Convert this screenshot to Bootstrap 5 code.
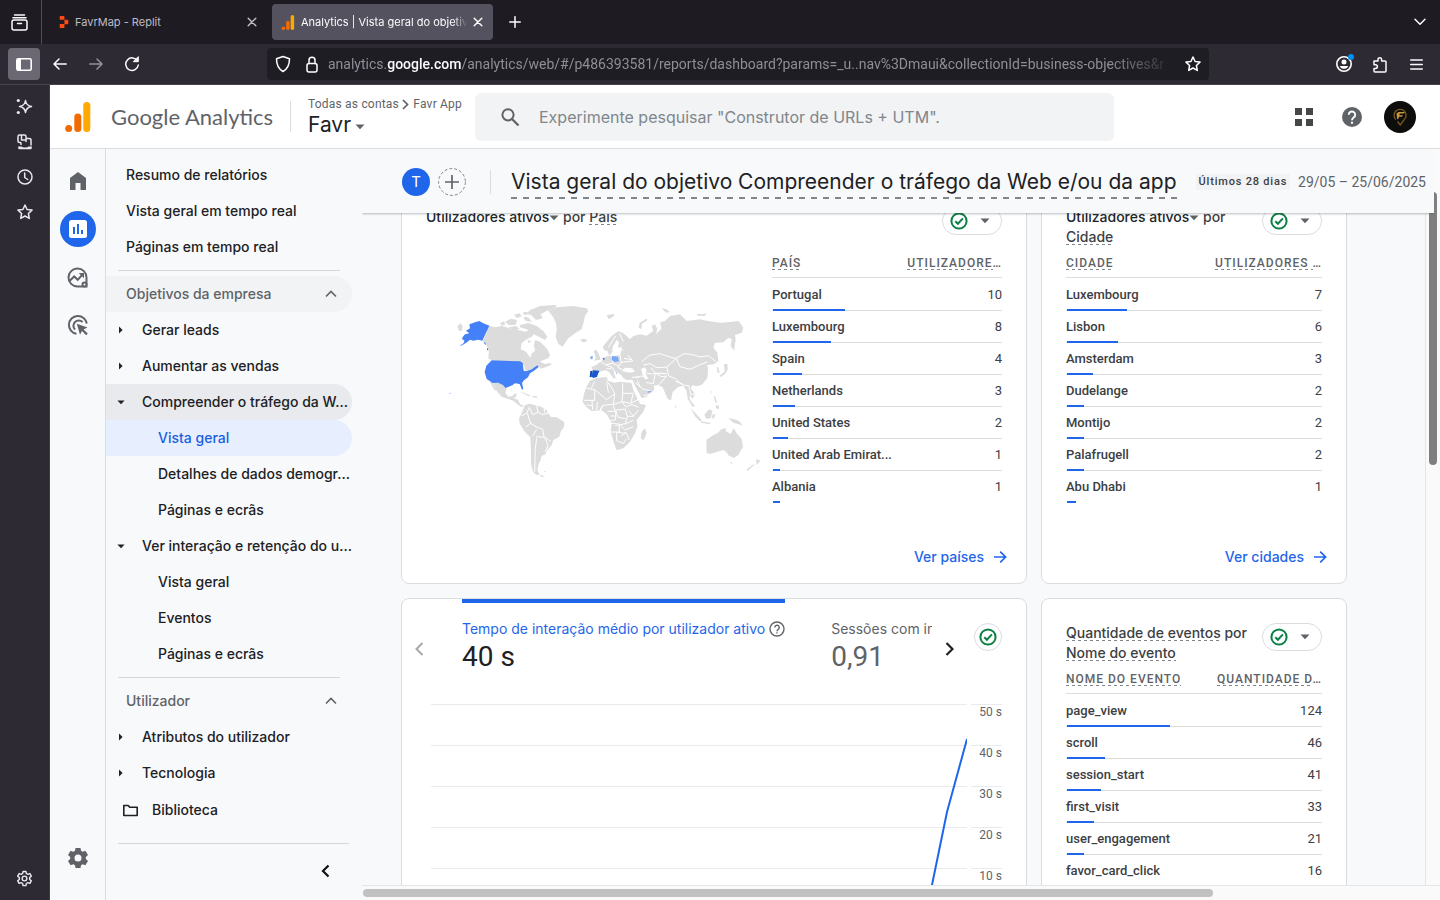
<!DOCTYPE html>
<html lang="pt">
<head>
<meta charset="utf-8">
<meta name="viewport" content="width=device-width, initial-scale=1">
<title>Analytics | Vista geral do objetivo</title>
<link href="https://cdn.jsdelivr.net/npm/bootstrap@5.3.0/dist/css/bootstrap.min.css" rel="stylesheet">
<style>
:root{--blue:#1f66ea;--ink:#202124;--text:#3c4043;--muted:#5f6368;--line:#dadce0;--page:#f8f9fb;--sans:Inter,"Open Sans",sans-serif;--data:Roboto,"Liberation Sans",sans-serif}
body{font-family:var(--sans);font-size:14px;line-height:20px;color:var(--ink);background:var(--page);overflow:hidden}
button{font:inherit;color:inherit;background:none;border:0;padding:0}
a{color:inherit;text-decoration:none}
svg{display:block;flex:none}
.stroke{fill:none;stroke:currentColor;stroke-width:1.5;stroke-linecap:round;stroke-linejoin:round}
.ic{display:flex;align-items:center;justify-content:center;flex:none}
.min-w{min-width:0}
.min-h{min-height:0}
.gray{color:var(--muted)}
/* browser window */
.tabstrip{height:44px;background:#1e1b22;color:#fbfbfe;font-size:11px}
.pinned{width:42px;border-right:1px solid #4f4c57;margin-right:8px;padding-right:2px}
.btab{width:221px;height:36px;border-radius:4px;padding-left:9px;padding-right:10px;gap:6px}
.btab.on{background:#54525e}
.btab.off{width:222px;color:#bfbcc6;padding-right:15px}
.tablist-btn{padding-right:14px}
.fade-end{-webkit-mask-image:linear-gradient(90deg,#000 92%,transparent);mask-image:linear-gradient(90deg,#000 92%,transparent)}
.toolbar{height:41px;background:#2d2a33;color:#fbfbfe;border-bottom:1px solid #45434b}
.tools-start{width:267px;padding-left:8px}
.tools-start .ic{width:32px;height:32px;margin-right:4px;border-radius:4px}
.tools-start .ic.on{background:#6b6873}
.tools-end{width:231px;padding-right:8px}
.tools-end .ic{width:32px;height:32px;margin-left:4px}
.urlbar{height:32px;background:#1f1d24;border-radius:4px;color:#8f8d96;font:14px/20px var(--data);padding:0 8px}
.urlbar b{font-weight:500;color:#fbfbfe}
.lock{margin:0 10px 0 15px}
.sidestrip{width:50px;background:#2d2a33;color:#e9e8ee;padding:4px 0;border-right:1px solid #403d47}
.sidestrip .ic{width:49px;height:35px}
/* header */
.topbar{height:64px;background:#fff;border-bottom:1px solid var(--line);padding-right:24px}
.brand{width:240px;padding-left:15px;gap:20px;font:22px/28px Lato,var(--data);color:var(--muted)}
.account{width:184px;padding-left:17px}
.vline{width:1px;background:var(--line)}
.crumb{font:12px/16px var(--data);color:var(--muted);letter-spacing:.2px}
.prop{font-size:21px;line-height:26px}
.search{max-width:639px;height:48px;background:#f1f3f4;border-radius:6px;padding-left:24px;gap:16px}
.search input{border:0;background:none;outline:0;font-size:16px;color:#80868b}
.search input::placeholder{color:#80868b;opacity:1}
.top-icon{width:32px;height:32px;margin-left:16px;color:var(--muted)}
/* navigation */
.rail{width:56px;border-right:1px solid var(--line);padding:8px 0 18px;color:var(--muted)}
.rail .ic{width:55px;height:48px}
.rail .disc{width:36px;height:36px;border-radius:50%;background:var(--blue)}
.sidenav{width:256px;padding-top:8px;font-weight:500}
.row-link{height:36px;width:246px;padding-left:20px;display:flex;align-items:center;white-space:nowrap;border-radius:0 18px 18px 0}
.row-link.l1{padding-left:11px;gap:17px}
.row-link.l1 svg{width:8px}
.row-link.l2{padding-left:52px}
.row-link.lib{padding-left:16px;gap:13px;height:38px}
.row-link.group{color:var(--muted);padding-right:15px;justify-content:space-between}
.row-link.tint{background:#f1f3f4}
.row-link.open{background:#e8eaed}
.row-link.sel{background:#e7effe;color:#1a5fe0}
.rule{height:1px;width:222px;background:#d3d6da;margin:5px 0 5px 12px}
.rule.wide{width:231px;margin:14px 0 0 12px}
.fold{padding:20px;margin-right:12px}
/* report */
.report-head{height:64px;margin-right:-9px;padding:2px 0 0 40px;background:var(--page);box-shadow:0 1px 2px rgba(60,64,67,.35);clip-path:inset(0 0 -4px 0);position:relative;z-index:2}
.round{width:28px;height:28px;border-radius:50%;background:var(--blue);font-size:15px}
.sep{height:24px;margin:0 20px 0 24px}
.title{font-size:21px;line-height:30px;font-weight:400}
.dash{background:repeating-linear-gradient(90deg,#80868b 0 3px,transparent 3px 6px) left bottom/100% 1px no-repeat}
.dash-lg{background:repeating-linear-gradient(90deg,#80868b 0 6px,transparent 6px 12px) left bottom/100% 2px no-repeat;padding:2px 0}
.chip{font:500 11px/16px var(--data);letter-spacing:.8px;color:var(--text);background:#f1f3f4;padding:0 3px}
.range{font:14px/20px var(--data);color:var(--muted)}
.vscroll{width:15px;border-left:1px solid #e6e6e6;background:#fafafa}
.vscroll div{width:8px;height:273px;margin:43px 0 0 3px;border-radius:4px;background:#7f7f7f}
.hscroll{height:15px;border-top:1px solid #e6e6e6;background:#fafafa;padding:3px 1px}
.hscroll div{height:8px;width:79%;border-radius:4px;background:#c1c1c1}
.board{margin-top:-31px;padding:0 78px 0 39px;display:grid;grid-template-columns:626fr 306fr;grid-template-rows:402px 420px;gap:14px}
.tile{background:#fff;border:1px solid var(--line);border-radius:8px;padding:24px;min-width:0;display:flex;flex-direction:column}
.tile-title{height:40px;color:var(--text);display:flex;justify-content:space-between;align-items:flex-start;font-weight:500}
.tile-title div>svg{display:inline-block}
.pill{height:28px;width:60px;border:1px solid var(--line);border-radius:14px;display:flex;align-items:center;justify-content:space-between;padding:0 11px 0 7px;background:#fff;flex:none}
.pill.single{width:28px;padding:0;justify-content:center}
.map{margin:43px 0 0 14px}
.side-col{width:230px}
.data{width:100%;table-layout:fixed;font:500 13px/20px var(--data);color:var(--text)}
.data th,.data td{padding:0}
.data thead th{font-size:12px;line-height:18px;font-weight:500;letter-spacing:1px;color:var(--muted);height:31px;white-space:nowrap;background:linear-gradient(var(--line),var(--line)) 0 100%/100% 1px no-repeat}
.data thead .num{width:100px}
.data.side thead .num{width:108px}
.data tbody th{font-weight:500;height:32px;white-space:nowrap}
.data tbody tr:first-child th{height:33px}
.data tbody tr{background:linear-gradient(var(--blue),var(--blue)) 1px 100%/var(--w) 2px no-repeat,linear-gradient(var(--line),var(--line)) 0 100%/100% 1px no-repeat}
.data tbody tr.end{background:linear-gradient(var(--blue),var(--blue)) 1px 100%/var(--w) 2px no-repeat}
.num{text-align:right}
.data tbody .num{font-weight:400}
.more{color:var(--blue);font-weight:500;margin:auto -6px -8px auto;display:flex;align-items:center;gap:8px}
.metrics{margin:-24px 0 0 -24px}
.metric-list{margin-left:26px;gap:46px}
.metric{border-top:4px solid transparent;padding-top:16px;flex:none;color:var(--muted);text-align:left}
.metric.on{border-color:var(--blue)}
.metric.on .name{color:var(--blue)}
.metric .val{font-size:28px;line-height:36px;font-family:var(--data);display:block}
.metric.on .val{color:var(--ink)}
.step{width:34px;height:32px;margin-top:34px}
.plot{position:relative;margin:29px 0 0 5px}
.tick{height:41px;gap:4px;font:12px/15px var(--data);color:var(--muted)}
.tick>*{border-top:1px solid #e8eaed}
.tick span{width:31px;text-align:right}
.trend{position:absolute;right:35px;top:0}
</style>
</head>
<body class="vh-100 d-flex flex-column">
<svg class="d-none">
<symbol id="ok" viewBox="0 0 18 18"><g fill="none" stroke="#0b8043" stroke-width="2"><circle cx="9" cy="9" r="7.6"/><path d="M5.3 9.2l2.6 2.6 5-5.4"/></g></symbol>
<symbol id="caret" viewBox="0 0 10 6"><path d="M.5.5h9L5 5.3z" fill="currentColor"/></symbol>
<symbol id="right" viewBox="0 0 6 10"><path d="M.5.5v9L5 5z" fill="currentColor"/></symbol>
<symbol id="arrow" viewBox="0 0 16 16"><path d="M2 8h11.5M8.2 2.6L13.6 8l-5.4 5.4" fill="none" stroke="currentColor" stroke-width="1.7"/></symbol>
<symbol id="ga" viewBox="0 0 26 30"><rect x="18.3" width="7" height="30" rx="3.5" fill="#ffa800"/><rect x="9.3" y="11.5" width="7" height="18.5" rx="3.5" fill="#f26b00"/><circle cx="3.7" cy="26.4" r="3.5" fill="#f26b00"/></symbol>
<symbol id="star" viewBox="0 0 16 16"><path d="M8 1l2.1 4.5 4.9.6-3.6 3.4.9 4.9L8 12l-4.3 2.4.9-4.9L1 6.1l4.9-.6z"/></symbol>
<symbol id="x" viewBox="0 0 10 10"><path d="M1.200 1.200l7.600 7.600M8.800 1.200L1.200 8.800"/></symbol>
</svg>

<header class="flex-shrink-0">
  <div class="tabstrip d-flex align-items-center">
    <button class="pinned ic h-100" aria-label="Lista de separadores"><svg class="stroke" width="17" height="17" viewBox="0 0 17 17"><path d="M3.500 1h10M2 3.700h13"/><rect x="1" y="6" width="15" height="10" rx="2"/><path d="M6.500 9.500h4"/></svg></button>
    <div class="btab off d-flex align-items-center">
      <svg width="10" height="12" viewBox="0 0 10 14"><path d="M0 1q0-1 1-1h3.500q1 0 1 1v3.500H0zM5.500 4.500H9q1 0 1 1v3q0 1-1 1H5.500zM0 9.300h5.500V13q0 1-1 1H1q-1 0-1-1z" fill="#ff4a13"/></svg>
      <span class="flex-grow-1">FavrMap - Replit</span>
      <button aria-label="Fechar"><svg class="stroke" width="10" height="10"><use href="#x"/></svg></button>
    </div>
    <div class="btab on d-flex align-items-center">
      <svg width="14" height="15"><use href="#ga"/></svg>
      <span class="flex-grow-1 overflow-hidden text-nowrap fade-end">Analytics | Vista geral do objetivo</span>
      <button aria-label="Fechar"><svg class="stroke" width="10" height="10"><use href="#x"/></svg></button>
    </div>
    <button class="ic px-3" aria-label="Novo separador"><svg class="stroke" width="12" height="12" viewBox="0 0 12 12"><path d="M6 .7v10.600M.7 6h10.600"/></svg></button>
    <button class="ic ms-auto tablist-btn" aria-label="Listar separadores"><svg class="stroke" width="12" height="8" viewBox="0 0 12 8"><path d="M1 1.300l5 5 5-5"/></svg></button>
  </div>
  <div class="toolbar d-flex align-items-center">
    <div class="tools-start d-flex flex-shrink-0">
      <button class="ic on" aria-label="Barra lateral"><svg width="16" height="13" viewBox="0 0 16 13"><rect x=".8" y=".8" width="14.400" height="11.400" rx="1.500" fill="none" stroke="#fff" stroke-width="1.600"/><path d="M1 1h4v11H1z" fill="#fff"/></svg></button>
      <button class="ic" aria-label="Retroceder"><svg class="stroke" width="14" height="12" viewBox="0 0 14 12"><path d="M13.300 6H1M6 1L1 6l5 5"/></svg></button>
      <button class="ic opacity-50" aria-label="Avançar"><svg class="stroke" width="14" height="12" viewBox="0 0 14 12"><path d="M.7 6H13M8 1l5 5-5 5"/></svg></button>
      <button class="ic" aria-label="Recarregar"><svg class="stroke" width="16" height="16" viewBox="0 0 16 16"><path d="M13.500 5A6.300 6.300 0 1 0 14.300 9"/><path d="M14.300 1v4.700H9.600z" fill="currentColor" stroke-width="1"/></svg></button>
    </div>
    <div class="urlbar d-flex align-items-center flex-grow-1 overflow-hidden">
      <svg class="stroke text-white" width="16" height="18" viewBox="0 0 16 18"><path d="M8 1.500l6.500 2.300c0 6-1.500 10-6.500 12.700C3 13.800 1.500 9.800 1.500 3.800z"/></svg>
      <svg class="stroke text-white lock" width="12" height="17" viewBox="0 0 12 17"><rect x="1" y="7.500" width="10" height="8.500" rx="2"/><path d="M3 7.500V4.300a3 3 0 0 1 6 0v3.200"/></svg>
      <span class="flex-grow-1 overflow-hidden text-nowrap fade-end">analytics.<b>google.com</b>/analytics/web/#/p486393581/reports/dashboard?params=_u..nav%3Dmaui&amp;collectionId=business-objectives&amp;r</span>
      <button class="text-white ms-2" aria-label="Adicionar marcador"><svg class="stroke" width="16" height="16"><use href="#star"/></svg></button>
    </div>
    <div class="tools-end d-flex justify-content-end flex-shrink-0">
      <button class="ic" aria-label="Conta"><svg width="20" height="22" viewBox="-1 1 20 22"><circle cx="9" cy="12" r="7.200" fill="none" stroke="#fff" stroke-width="1.600"/><circle cx="9" cy="10" r="2.500" fill="#fff"/><path d="M4.700 14h8.600c-.8 2-2.500 2.800-4.300 2.800S5.500 16 4.700 14z" fill="#fff"/><circle cx="16" cy="5" r="3" fill="#0090ed"/></svg></button>
      <button class="ic" aria-label="Extensões"><svg class="stroke" width="16" height="17" viewBox="0 0 16 17"><path d="M2 5h4V3.500a1.800 1.800 0 0 1 3.600 0V5H13q1 0 1 1v9q0 1-1 1H3q-1 0-1-1v-2.500h1.500a1.900 1.900 0 0 0 0-3.800H2z"/></svg></button>
      <button class="ic" aria-label="Menu"><svg class="stroke" width="13" height="11" viewBox="0 0 13 11"><path d="M.7 1h11.600M.7 5.500h11.600M.7 10h11.600"/></svg></button>
    </div>
  </div>
</header>

<div class="d-flex flex-grow-1 min-h">
  <aside class="sidestrip d-flex flex-column flex-shrink-0">
    <button class="ic" aria-label="Assistente"><svg width="17" height="17" viewBox="0 0 17 17"><path d="M9.500 2.500q.8 5.200 6 6-5.200.8-6 6-.8-5.200-6-6 5.200-.8 6-6z" class="stroke"/><circle cx="2.300" cy="2.500" r="1.600" fill="currentColor"/><circle cx="2.300" cy="14.500" r="1.600" fill="currentColor"/></svg></button>
    <button class="ic" aria-label="Separadores sincronizados"><svg width="16" height="16" viewBox="0 0 16 16"><path d="M3.500 8.500h-1q-1.500 0-1.500-1.500V2.500Q1 1 2.500 1h5Q9 1 9 2.500v5M4.500 1v5M4.500 6H9M9 4.500h3q2 0 2 1.500v5M4 9v1.500" class="stroke"/><path d="M1 12.500h3.500q.5 1 3.500 1t3.500-1H15q0 2.700-1.500 2.700h-11Q1 15.200 1 12.500z" fill="currentColor"/></svg></button>
    <button class="ic" aria-label="Histórico"><svg class="stroke" width="16" height="16" viewBox="0 0 16 16"><circle cx="8" cy="8" r="7"/><path d="M7.700 4v4.500l3 2"/></svg></button>
    <button class="ic" aria-label="Marcadores"><svg class="stroke" width="16" height="16"><use href="#star"/></svg></button>
    <button class="ic mt-auto" aria-label="Personalizar"><svg class="stroke" width="17" height="17" viewBox="0 0 18 18"><path d="M7.500 1.500h3l.5 2.200 1.500.9 2.200-.8 1.500 2.700L14.500 8v2l1.700 1.500-1.500 2.700-2.200-.8-1.500.9-.5 2.200h-3L7 14.300l-1.500-.9-2.200.8-1.500-2.700L3.500 10V8L1.800 6.500l1.500-2.700 2.200.8L7 3.700z"/><circle cx="9" cy="9" r="2.500"/></svg></button>
  </aside>

  <div class="d-flex flex-column flex-grow-1 min-w">
    <div class="topbar d-flex align-items-center flex-shrink-0">
      <div class="brand d-flex align-items-center flex-shrink-0"><svg width="26" height="30"><use href="#ga"/></svg><span class="text-nowrap">Google Analytics</span></div>
      <div class="vline h-50"></div>
      <div class="account flex-shrink-0 text-nowrap">
        <div class="crumb">Todas as contas <svg class="d-inline-block align-middle" width="8" height="11" viewBox="0 0 8 11"><path d="M1 1l4.500 4.500L1 10" fill="none" stroke="currentColor" stroke-width="1.700"/></svg> Favr App</div>
        <button class="prop d-flex align-items-center">Favr <svg class="ms-1 mt-1 gray" width="10" height="6"><use href="#caret"/></svg></button>
      </div>
      <label class="search d-flex align-items-center flex-grow-1">
        <svg width="22" height="22" viewBox="0 0 22 22"><circle cx="9" cy="8.800" r="5.600" fill="none" stroke="#5f6368" stroke-width="2"/><path d="M13 13l6.500 6.500" stroke="#5f6368" stroke-width="2.300"/></svg>
        <input class="flex-grow-1" type="search" aria-label="Pesquisar" placeholder="Experimente pesquisar &quot;Construtor de URLs + UTM&quot;.">
      </label>
      <button class="top-icon ic ms-auto" aria-label="Aplicações"><svg width="18" height="18" viewBox="0 0 18 18"><path d="M0 0h7v7H0zM11 0h7v7h-7zM0 11h7v7H0zM11 11h7v7h-7z" fill="#444746"/></svg></button>
      <button class="top-icon ic" aria-label="Ajuda"><svg width="20" height="20" viewBox="0 0 20 20"><circle cx="10" cy="10" r="10" fill="currentColor"/><path d="M6.800 7.700a3.200 3.200 0 1 1 5 2.600c-1 .8-1.800 1.300-1.800 2.900" fill="none" stroke="#fff" stroke-width="1.900"/><path d="M9 14.800h2v2H9z" fill="#fff"/></svg></button>
      <button class="top-icon ic" aria-label="Perfil"><svg width="32" height="32" viewBox="0 0 32 32"><circle cx="16" cy="16" r="16" fill="#0d0d0c"/><path d="M11.800 18.500a6 6 0 1 1 9.200-.8L16.300 24l-2.800-3.500" fill="none" stroke="#7d5a22" stroke-width="1.300"/><path d="M12.500 12.500l2-1.500H21l-1.300 1.500h-4l-.3 1.700h3.700l-1.200 1.500h-2.800L14 18.500l-1-1z" fill="#c8963c"/></svg></button>
    </div>

    <div class="d-flex flex-grow-1 min-h">
      <nav class="rail d-flex flex-column flex-shrink-0">
        <a href="#" class="ic" aria-label="Página inicial"><svg width="16" height="18" viewBox="0 0 16 18"><path d="M0 6l8-6 8 6v12h-5.500v-7h-5v7H0z" fill="currentColor"/></svg></a>
        <a href="#" class="ic" aria-label="Relatórios"><span class="disc ic"><svg width="18" height="18" viewBox="0 0 18 18"><rect width="18" height="18" rx="2.500" fill="#fff"/><path d="M4 7h2v7H4zM8 4h2v10H8zM12 10h2v4h-2z" fill="#1f66ea"/></svg></span></a>
        <a href="#" class="ic" aria-label="Explorar"><svg width="21" height="21" viewBox="0 0 21 21"><path d="M10.500 1.500a9 9 0 1 0 0 18h9v-9a9 9 0 0 0-9-9z" fill="none" stroke="currentColor" stroke-width="2"/><path d="M2.500 14l4.700-4.500 3.500 3.300 4.800-5.300" fill="none" stroke="currentColor" stroke-width="2"/><path d="M11.700 6H17v5.300z" fill="currentColor"/><circle cx="17.500" cy="17.500" r="3" fill="currentColor"/><circle cx="17.500" cy="17.500" r="1" fill="#f8f9fb"/></svg></a>
        <a href="#" class="ic" aria-label="Publicidade"><svg width="22" height="22" viewBox="0 0 22 22"><g fill="none" stroke="currentColor" stroke-width="2"><path d="M9.500 19.800A9 9 0 1 1 19.800 9.500"/><path d="M8 15.600A5.300 5.300 0 1 1 15.600 8"/></g><path d="M9.800 9.800l10.700 3.600-3.900 2 4.200 4.200-1.600 1.600-4.200-4.200-2 3.700z" fill="currentColor"/></svg></a>
        <a href="#" class="ic mt-auto" aria-label="Administração"><svg width="20" height="20" viewBox="0 0 20 20"><path fill-rule="evenodd" d="M7.500 0h5l.5 2.800 1.700 1 2.700-1L20 7l-2.200 1.900v2.200L20 13l-2.600 4.200-2.700-1-1.700 1-.5 2.800h-5L7 17.200l-1.700-1-2.700 1L0 13l2.200-1.900V8.900L0 7l2.600-4.200 2.700 1L7 2.800zM10 6.500a3.500 3.500 0 1 0 0 7 3.500 3.500 0 0 0 0-7z" fill="currentColor"/></svg></a>
      </nav>

      <nav class="sidenav flex-shrink-0">
        <a href="#" class="row-link">Resumo de relatórios</a>
        <a href="#" class="row-link">Vista geral em tempo real</a>
        <a href="#" class="row-link">Páginas em tempo real</a>
        <div class="rule"></div>
        <button class="row-link group tint">Objetivos da empresa <svg width="12" height="8" viewBox="0 0 12 8"><path d="M1 6.500l5-5 5 5" fill="none" stroke="currentColor" stroke-width="1.600"/></svg></button>
        <a href="#" class="row-link l1"><svg height="8"><use href="#right"/></svg>Gerar leads</a>
        <a href="#" class="row-link l1"><svg height="8"><use href="#right"/></svg>Aumentar as vendas</a>
        <a href="#" class="row-link l1 open"><svg height="5"><use href="#caret"/></svg>Compreender o tráfego da W...</a>
        <a href="#" class="row-link l2 sel">Vista geral</a>
        <a href="#" class="row-link l2">Detalhes de dados demogr...</a>
        <a href="#" class="row-link l2">Páginas e ecrãs</a>
        <a href="#" class="row-link l1"><svg height="5"><use href="#caret"/></svg>Ver interação e retenção do u...</a>
        <a href="#" class="row-link l2">Vista geral</a>
        <a href="#" class="row-link l2">Eventos</a>
        <a href="#" class="row-link l2">Páginas e ecrãs</a>
        <div class="rule"></div>
        <button class="row-link group">Utilizador <svg width="12" height="8" viewBox="0 0 12 8"><path d="M1 6.500l5-5 5 5" fill="none" stroke="currentColor" stroke-width="1.600"/></svg></button>
        <a href="#" class="row-link l1"><svg height="8"><use href="#right"/></svg>Atributos do utilizador</a>
        <a href="#" class="row-link l1"><svg height="8"><use href="#right"/></svg>Tecnologia</a>
        <a href="#" class="row-link lib"><svg width="17" height="13" viewBox="0 0 17 13"><path d="M1.800 11.500V1.500h4.400l1.500 1.700h7.500v8.300z" fill="none" stroke="currentColor" stroke-width="1.600" stroke-linejoin="round"/></svg>Biblioteca</a>
        <div class="rule wide"></div>
        <button class="d-block ms-auto fold" aria-label="Recolher"><svg width="9" height="14" viewBox="0 0 9 14"><path d="M7.500 1.500L2 7l5.500 5.500" fill="none" stroke="#111" stroke-width="2.200"/></svg></button>
      </nav>

      <main class="d-flex flex-column flex-grow-1 min-w">
        <div class="d-flex flex-grow-1 min-h">
          <div class="d-flex flex-column flex-grow-1 min-w">
            <div class="report-head d-flex align-items-center flex-shrink-0 text-nowrap">
              <span class="round ic text-white me-2">T</span>
              <button aria-label="Adicionar comparação"><svg width="28" height="28" viewBox="0 0 28 28"><circle cx="14" cy="14" r="13.400" fill="none" stroke="#80868b" stroke-dasharray="3 2"/><path d="M14 7v14M7 14h14" stroke="#5f6368" stroke-width="1.700"/></svg></button>
              <div class="vline sep"></div>
              <h1 class="title dash-lg mb-0">Vista geral do objetivo Compreender o tráfego da Web e/ou da app</h1>
              <span class="chip ms-auto me-2">Últimos 28 dias</span>
              <span class="range me-2">29/05 – 25/06/2025</span>
            </div>
            <div class="flex-grow-1 overflow-hidden">
              <div class="board">
                <section class="tile">
                  <div class="tile-title"><div><span class="text-dark">Utilizadores ativos</span><svg class="gray" width="10" height="7" viewBox="0 0 10 7"><use href="#caret" width="10" height="6"/></svg> por <span class="dash">País</span></div>
                    <button class="pill" aria-label="Qualidade dos dados"><svg width="18" height="18"><use href="#ok"/></svg><svg class="gray" width="10" height="6"><use href="#caret"/></svg></button></div>
                  <div class="d-flex justify-content-between">
                    <svg class="map" width="330" height="200" viewBox="0 0 990 600" role="img" aria-label="Mapa mundial">
                      <g fill="#dcdcdc">
                        <path d="M52 108l10-8 6 8-2 14-9 1zM148 107l17 5 20-4 15 4 15 6 20 2 20 5 10-3 5-12 8 8 7 10-10 12-15 8-15 12-3 18 16 7 7 10 7 8 3-13 10-7-3-18 3-15 15 5 10 10 12 13 8 17-5 10-15 5-10 5 15 7 16-3 4 5-17 7-14 5-10-7-17 7-20 7-5-17-15-9-80-6-12-5 2-25-10-20-8-8z"/>
                        <path d="M240 105l25-6 25 9 20 15 12 17-7 10-15-8-16-8-14-10-14-8-16-4zM270 60l30-12 50-3-5 9-25 9-18 10 6 12-20 5-14-14-14-5zM195 95l18-9 18 4-4 14-20 2zM222 74l16-4 8 9-16 5zM250 80l14 2 12 14-20-4zM205 112l22-4 12 8-18 6zM180 100l12-6 4 9-10 4zM252 65l12 2-4 9-12-4zM262 150l12 4-8 6z"/>
                        <path d="M325 62l25-10 50-4 40 7 5 8-10 15-5 22-5 18-20 12-20 15-10 15-7 10-13-8-8-22 3-20-2-20-8-18zM420 149l10-3 11 3-2 6-10 2z"/>
                        <path d="M158 275l32 8 10 12-4 14 9 11 13-2 6-8 6 2-3 10-7 3 14 4 6 14 12 4-8 4-14-10-10-9-15-5-20-7-15-18zM149 275h7l13 25-5 1zM238 307l15 1 20 10-7 1-14-8zM278 318l12 1 2 4-14-1z"/>
                        <path d="M255 345l15-4 20 6 15 4 15 10 12 20 18 1 23 14-1 14-10 15-4 15-18 10-5 15-13 15-5 12-12 6-4 14-6 13-3 15 7 15-10-1-10-8-6-25v-42l-2-38-16-15-16-25-2-15 7-15zM302 554l12 5-12 3zM312 543l8 3-8 1z"/>
                        <path d="M450 272l20-8 30-3 4 11 20 6 15-3 35 4 6 21 14 30 6 12 18 3-8 20-20 25 2 20-7 20-15 25-20 20-20 6-8-21-10-35 3-25-15-28-15-11-30 2-15-11-12-16 4-25 8-22zM605 425l10-10 5 14-9 22-9-6z"/>
                        <path d="M461 182l9-2 8 16 4 13-20 3 5-9zM488 172l12-17 15-17 20-15 14 6 3 25-8 17-10 2 3-17-7-6-12 20-1 16-9 12-7-18-5 4zM468 225l18-13 6-10 12-4 12 1 25-4 3-20 8-25-4-22 12 10 10 10 10-10 20-5 20 4 20-15-5-14 10-5 7 14-4 15 16-15-3-20 14-4 15-15 30-5 20 20 40-5 20 4 40 6 30-2 26-3 14 20-5 15-20 7 2 14-5 33-10-14 3-20-10-5-15 14-25 1-5 15 12 15 3 25-13 10-20 2 2 14-2 25-16 20-14 5-15-3-5 8 14 20-8 12-10-12 2 15 15 20-7 2-15-25-4-25-10-14-15 4-16 15-5 25-10-4-15-35-15-7-12 2 2 12-24 22-16 4-16-32-10-24-17 1-10-5-6-10-15-10-8 2 6 17-6 2-12-18-10-7-15 2-14 8-10-7-6-13z"/>
                        <path d="M500 76l24-5-4 9-14 8zM596 112l3-14 20-12 4 4-17 11-2 17zM664 54l15 4 11 9-11 1zM770 73l30-2-5 6h-22zM830 230l5 2 4 18-6-2zM852 223l10-2 1 17-7 13-14 10-3-4 15-12zM752 355l14 14 20 22-6 3-14-14zM793 374l14-16 10 4-4 22-14 3zM783 394l28 5-1 4-27-5zM818 372l8 2-5 12-5-2zM820 318l6 2 6 20-6-4zM828 345l10 3-2 10-8-3zM866 384l16 4 14 4 13 15-14-5-12-2-10-8zM704 345l6 6-3 5zM812 303l3 1-2 10z"/>
                        <path d="M799 450l20-14 15-8 10-10 14-4-1 9 15 9 9-18 8 15 16 18 4 23-14 25-14 9-16-8-5-9-10-7-20 6-20 6-10-3zM870 517l7-1-3 7zM948 508l14 4-12 12zM946 522l-23 20-4-3 18-14z"/>
                      </g>
                      <g fill="#fff"><path d="M545 243l10-10 22 2 8 10-16 3zM603 236l12-4 5 10-3 10 8 14-10 2-8-16z"/><path d="M577 282l7 4 22 40-5 2z"/></g>
                      <g fill="none" stroke="#fff" stroke-width="3">
                        <path d="M440 295l24 4v32h-32M464 299l36 30 24-18-8-16-16-23M464 275l-10 20M524 311l-4 32-32 3-6 16M500 278l5 30M548 280v30h32M548 310l-2 25-24 8M580 310l-8 30-26-5M546 335l10 15 20-6 20 8M572 340l24-12M520 343l4 18 32-4M488 346l-8 14M456 330l2 30M440 345l16 2M472 335l-2 25M502 364h26l6 18 22 4M528 364l-2 26-22 2M556 357l6 22-6 22-30 6M562 379h20M512 400l26 2v24h-26M538 402l18 18 24-10M530 452v-25l30 3 8 20M544 438l14-12M566 362l14 16 16-18M512 378h12M530 452l20 8 10-14M580 390l-24 12"/>
                        <path d="M244 378l16-8 8-18M268 352l10 22 18-8 10 8 24-6M290 347l4 20M262 370l10 30-14 10M272 400l16 10 20 8 4 22 20 14M278 438l12-20M288 440l26 2 10 24-8 20M290 445l-4 30-2 70M312 352l2 16M324 360v12"/>
                        <path d="M605 215l25-20 30-4 30 10 18 4-14 14-14 12-30 2-20-12-20 4M708 205l24-14 20 2 30 8 24-4 22 18M708 205l12 25 30 8 30-14 22-8M680 230l6 28 20 8 20 18 20 4M632 233l14 16 34 2M620 250l20 2 26-2M646 249l-6 32M680 258l-30 34M640 281l-22-4M588 264l16-6 14 4M600 290l-8-18M586 278l24 20 22 4M612 318l24-8M706 274l22 8M746 285l6 28 14 2M766 300l-4 12M650 252l14 8 16-2M540 195l4 22 34-4M544 217l-10 16M578 213l-14-18M516 198l2 22 18 8M516 220l-20 4M496 224l20 8 10 16M500 235l14 2M550 180h-12M505 172l22-34M538 130l12 24M534 233l14 6M552 205l24 4M480 213l14 10M575 262l26-2"/>
                      </g>
                      <path d="M68 141l7-8 13-3-10-8 12-7-2-12 17-6 13-4 12 7 18 7-21 45-13-3-14 3-10-3-9 8-15 9-8 3 14-11 1-7-7-3zM132 155l6 7-1 3-6-7zM141 174l3 1 1 7-4-2zM155 211l85 3 8 4 3 24 7 2 17-6 17-12 4 5-14 11-12 8-6 12-12 9-6 8 4 18-4 2-7-17-14-2-8 6-20 8-8-9-15-7-16 1-18-12-6-20 5-20z" fill="#4480f8"/>
                      <path d="M516 198l18 2 3 14-13 2-9-6zM452 199h7l-2 9-6-1zM622 305l10-3 1 4-9 2zM28 308l5 2-3 3zM528 246l4 4-3 3z" fill="#7ba7fa"/>
                      <path d="M458 241l20 1-4 10-3 9-12 3-4-5zM487 206l6-3v7z" fill="#1b57cf"/><path d="M451 243l6-1-2 20-6-1z" fill="#1547b0"/>
                    </svg>
                    <div class="side-col">
                      <table class="data">
                        <thead><tr><th scope="col"><span class="dash">PAÍS</span></th><th scope="col" class="num"><span class="dash">UTILIZADORE</span>…</th></tr></thead>
                        <tbody>
                          <tr style="--w:72px"><th scope="row">Portugal</th><td class="num">10</td></tr>
                          <tr style="--w:58px"><th scope="row">Luxembourg</th><td class="num">8</td></tr>
                          <tr style="--w:29px"><th scope="row">Spain</th><td class="num">4</td></tr>
                          <tr style="--w:22px"><th scope="row">Netherlands</th><td class="num">3</td></tr>
                          <tr style="--w:15px"><th scope="row">United States</th><td class="num">2</td></tr>
                          <tr style="--w:7px"><th scope="row">United Arab Emirat...</th><td class="num">1</td></tr>
                          <tr class="end" style="--w:7px"><th scope="row">Albania</th><td class="num">1</td></tr>
                        </tbody>
                      </table>
                    </div>
                  </div>
                  <a href="#" class="more">Ver países <svg width="16" height="16"><use href="#arrow"/></svg></a>
                </section>

                <section class="tile">
                  <div class="tile-title"><div><span class="text-dark">Utilizadores ativos</span><svg class="gray" width="10" height="7" viewBox="0 0 10 7"><use href="#caret" width="10" height="6"/></svg> por<br><span class="dash">Cidade</span></div>
                    <button class="pill" aria-label="Qualidade dos dados"><svg width="18" height="18"><use href="#ok"/></svg><svg class="gray" width="10" height="6"><use href="#caret"/></svg></button></div>
                  <table class="data side">
                    <thead><tr><th scope="col"><span class="dash">CIDADE</span></th><th scope="col" class="num"><span class="dash">UTILIZADORES </span>…</th></tr></thead>
                    <tbody>
                      <tr style="--w:60px"><th scope="row">Luxembourg</th><td class="num">7</td></tr>
                      <tr style="--w:51px"><th scope="row">Lisbon</th><td class="num">6</td></tr>
                      <tr style="--w:26px"><th scope="row">Amsterdam</th><td class="num">3</td></tr>
                      <tr style="--w:17px"><th scope="row">Dudelange</th><td class="num">2</td></tr>
                      <tr style="--w:17px"><th scope="row">Montijo</th><td class="num">2</td></tr>
                      <tr style="--w:17px"><th scope="row">Palafrugell</th><td class="num">2</td></tr>
                      <tr class="end" style="--w:9px"><th scope="row">Abu Dhabi</th><td class="num">1</td></tr>
                    </tbody>
                  </table>
                  <a href="#" class="more">Ver cidades <svg width="16" height="16"><use href="#arrow"/></svg></a>
                </section>

                <section class="tile">
                  <div class="d-flex">
                    <div class="metrics d-flex flex-grow-1 overflow-hidden">
                      <button class="step ic" aria-label="Anterior"><svg width="9" height="14" viewBox="0 0 9 14"><path d="M7.500 1L1.500 7l6 6" fill="none" stroke="#a5a8ac" stroke-width="2"/></svg></button>
                      <div class="metric-list d-flex flex-grow-1 overflow-hidden text-nowrap">
                        <button class="metric on"><span class="name d-flex align-items-center">Tempo de interação médio por utilizador ativo <svg class="ms-1 gray" width="16" height="16" viewBox="0 0 16 16"><circle cx="8" cy="8" r="7" fill="none" stroke="currentColor" stroke-width="1.400"/><path d="M5.800 6.400a2.200 2.200 0 1 1 3.500 1.800C8.500 8.800 8 9.200 8 10.200" fill="none" stroke="currentColor" stroke-width="1.400"/><path d="M7.300 11.200h1.400v1.400H7.300z" fill="currentColor"/></svg></span><span class="val">40 s</span></button>
                        <button class="metric"><span class="name">Sessões com interação</span><span class="val">0,91</span></button>
                      </div>
                      <button class="step ic" aria-label="Seguinte"><svg width="9" height="14" viewBox="0 0 9 14"><path d="M1.500 1l6 6-6 6" fill="none" stroke="#202124" stroke-width="2.200"/></svg></button>
                    </div>
                    <button class="pill single ms-2" aria-label="Qualidade dos dados"><svg width="18" height="18"><use href="#ok"/></svg></button>
                  </div>
                  <div class="plot">
                    <div class="tick d-flex"><i class="flex-grow-1"></i><span>50 s</span></div>
                    <div class="tick d-flex"><i class="flex-grow-1"></i><span>40 s</span></div>
                    <div class="tick d-flex"><i class="flex-grow-1"></i><span>30 s</span></div>
                    <div class="tick d-flex"><i class="flex-grow-1"></i><span>20 s</span></div>
                    <div class="tick d-flex"><i class="flex-grow-1"></i><span>10 s</span></div>
                    <svg class="trend" width="60" height="205" viewBox="0 0 60 205"><path d="M22 197l3-16 15-73L60 35" fill="none" stroke="#1f66ea" stroke-width="2"/></svg>
                  </div>
                </section>

                <section class="tile">
                  <div class="tile-title"><div><span class="dash">Quantidade de eventos</span> por<br><span class="dash">Nome do evento</span></div>
                    <button class="pill" aria-label="Qualidade dos dados"><svg width="18" height="18"><use href="#ok"/></svg><svg class="gray" width="10" height="6"><use href="#caret"/></svg></button></div>
                  <table class="data side">
                    <thead><tr><th scope="col"><span class="dash">NOME DO EVENTO</span></th><th scope="col" class="num"><span class="dash">QUANTIDADE D</span>…</th></tr></thead>
                    <tbody>
                      <tr style="--w:103px"><th scope="row">page_view</th><td class="num">124</td></tr>
                      <tr style="--w:38px"><th scope="row">scroll</th><td class="num">46</td></tr>
                      <tr style="--w:34px"><th scope="row">session_start</th><td class="num">41</td></tr>
                      <tr style="--w:27px"><th scope="row">first_visit</th><td class="num">33</td></tr>
                      <tr style="--w:17px"><th scope="row">user_engagement</th><td class="num">21</td></tr>
                      <tr style="--w:13px"><th scope="row">favor_card_click</th><td class="num">16</td></tr>
                    </tbody>
                  </table>
                </section>
              </div>
            </div>
          </div>
          <div class="vscroll flex-shrink-0"><div></div></div>
        </div>
        <div class="hscroll flex-shrink-0"><div></div></div>
      </main>
    </div>
  </div>
</div>
<script src="https://cdn.jsdelivr.net/npm/bootstrap@5.3.0/dist/js/bootstrap.bundle.min.js"></script>
</body>
</html>
